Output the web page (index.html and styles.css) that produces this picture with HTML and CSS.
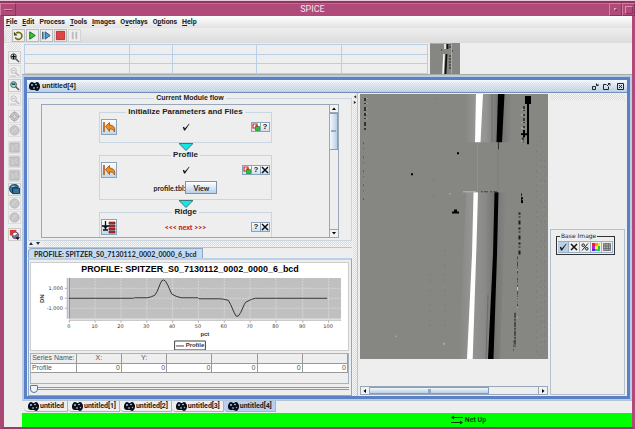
FILE: index.html
```html
<!DOCTYPE html>
<html lang="en">
<head>
<meta charset="utf-8">
<title>SPICE</title>
<link rel="stylesheet" href="styles.css">
</head>
<body>
<svg class="defs" aria-hidden="true">
  <symbol id="logo" viewBox="0 0 11 9"><rect x="0" y="1" width="11" height="7" rx="3" fill="#0a0f18"/><circle cx="3" cy="2" r="2" fill="#0a0f18"/><circle cx="8" cy="2" r="2" fill="#0a0f18"/><circle cx="8" cy="7" r="2" fill="#0a0f18"/><circle cx="3" cy="3" r="1" fill="#9bc4e6"/><circle cx="7" cy="2.500" r=".8" fill="#d8ecfa"/><circle cx="5" cy="6" r=".8" fill="#d8ecfa"/><circle cx="8.500" cy="5.500" r=".8" fill="#6da8d8"/></symbol>
  <symbol id="check" viewBox="0 0 8 8"><path d="M.8 4.200 2 3.700 2.900 5.500 7 .8 7.500 1 3 7.400H2z" fill="#111"/></symbol>
  <symbol id="cross" viewBox="0 0 8 8"><path d="M1 1 7 7M7 1 1 7" stroke="#111" stroke-width="1.500"/></symbol>
  <symbol id="undo" viewBox="0 0 14 14"><path d="M2 2v10" stroke="#b45a0c" stroke-width="1.600"/><path d="M3.500 6.500 7.500 2.500V5C11 5 13.500 7.500 12.500 12 11.500 9.500 10 9 7.500 9v2.500z" fill="#f58c18" stroke="#7d4512" stroke-width=".7"/></symbol>
  <symbol id="steps" viewBox="0 0 14 14"><path d="M3.500 1v9M0 6h7M1 10h5" stroke="#111" stroke-width="1.300"/><path d="m1 6 2.500 3L6 6z" fill="#111"/><path d="M7 2h6v2H7zM7 5h6v2H7zM7 8h6v2H7zM7 11h6v2H7z" fill="#c83228" stroke="#501010" stroke-width=".6"/></symbol>
  <symbol id="params" viewBox="0 0 8 8"><path d="M1 1h4v4H1z" fill="#fff" stroke="#d02020" stroke-width="1.200"/><path d="M3.500 3.500h4v4h-4z" fill="#21c832" stroke="#168a22" stroke-width=".7"/><path d="M3 3h3" stroke="#d02020"/></symbol>
  <symbol id="tri" viewBox="0 0 14 8"><path d="M0 .5h14L7 7.500z" fill="#18e6e6" stroke="#2b5a5c" stroke-width=".8"/></symbol>
  <symbol id="zoomin" viewBox="0 0 12 12"><path d="m7 7 4 4" stroke="#555" stroke-width="1.600"/><circle cx="5" cy="5" r="3" fill="#bfe6ee" stroke="#333"/><path d="M5 2.500v5M2.500 5h5" stroke="#111" stroke-width="1.300"/></symbol>
  <symbol id="zoomout" viewBox="0 0 12 12"><path d="m7 7 4 4" stroke="#555" stroke-width="1.600"/><circle cx="5" cy="5" r="3.200" fill="#7fe8e4" stroke="#555"/><path d="M3 4.500h4" stroke="#111" stroke-width="1.300"/></symbol>
  <symbol id="zoomoff" viewBox="0 0 12 12"><g stroke="#bbb" fill="none"><path d="m7 7 4 4" stroke-width="1.600"/><circle cx="5" cy="5" r="3"/><path d="M3 5h4M1 11h7"/></g></symbol>
  <symbol id="target" viewBox="0 0 12 12"><circle cx="6" cy="6" r="4.500" fill="#c9c9c9" stroke="#aaa"/><circle cx="6" cy="6" r="2" fill="#ddd" stroke="#aaa"/><path d="M6 0v3M6 9v3M0 6h3M9 6h3" stroke="#aaa"/></symbol>
  <symbol id="disc" viewBox="0 0 12 12"><circle cx="6" cy="6" r="5" fill="#c8c8c8" stroke="#b4b4b4"/><path d="m3 8 5-5" stroke="#ddd"/></symbol>
  <symbol id="grid" viewBox="0 0 12 12"><path d="M1 1h10v10H1z" fill="#c4c4c4" stroke="#b4b4b4"/><path d="m2 4 3 2-2 4M9 2 7 5l3 3" stroke="#d8d8d8" fill="none"/></symbol>
</svg>
<div class="app">
  <header class="titlebar">
    <button class="wm menu-btn" aria-label="Window menu"><i></i></button>
    <h1>SPICE</h1>
    <button class="wm dot" aria-label="Minimize"><i></i></button>
    <button class="wm box" aria-label="Maximize"><i></i></button>
  </header>
  <nav class="menubar">
    <a href="#"><u>F</u>ile</a><a href="#"><u>E</u>dit</a><a href="#">Process</a><a href="#"><u>T</u>ools</a><a href="#"><u>I</u>mages</a><a href="#">O<u>v</u>erlays</a><a href="#">O<u>p</u>tions</a><a href="#"><u>H</u>elp</a>
  </nav>
  <div class="toolbar">
    <span class="grip"></span>
    <button aria-label="Reload"><svg viewBox="0 0 12 12"><path d="M3.500 3.500A3.800 3.800 0 1 1 2.500 8" fill="none" stroke="#6c6a10" stroke-width="1.700"/><path d="M1 2v4h4z" fill="#444410"/></svg></button>
    <button aria-label="Run"><svg viewBox="0 0 12 12"><path d="M3 2v8l6-4z" fill="#2fd22f" stroke="#135c16"/></svg></button>
    <button aria-label="Step"><svg viewBox="0 0 12 12"><path d="M2 2v8" stroke="#234f75" stroke-width="1.500"/><path d="M4.500 2v8L10 6z" fill="#4aa0d8" stroke="#234f75"/></svg></button>
    <button aria-label="Stop"><svg viewBox="0 0 12 12"><path d="M1.500 1.500h9v9h-9z" fill="#e04444" stroke="#a83030"/></svg></button>
    <button class="off" aria-label="Pause"><svg viewBox="0 0 12 12"><path d="M4 2v8M8 2v8" stroke="#bbb" stroke-width="2"/></svg></button>
  </div>
  <div class="main">
    <aside class="side">
      <span class="grip"></span>
      <button aria-label="Zoom in"><svg><use href="#zoomin"/></svg></button>
      <button class="off" aria-label="Zoom in region"><svg><use href="#zoomoff"/></svg></button>
      <button aria-label="Zoom out"><svg><use href="#zoomout"/></svg></button>
      <button class="off gap" aria-label="Zoom to fit"><svg><use href="#zoomoff"/></svg></button>
      <button class="off" aria-label="Center"><svg><use href="#target"/></svg></button>
      <button class="off gap" aria-label="Rotate"><svg><use href="#disc"/></svg></button>
      <button class="off" aria-label="Crop"><svg><use href="#grid"/></svg></button>
      <button class="off" aria-label="Select"><svg><use href="#grid"/></svg></button>
      <button class="off" aria-label="Statistics"><svg><use href="#grid"/></svg></button>
      <button aria-label="Layers"><svg viewBox="0 0 12 12"><path d="M1 3C2 0 8 0 10 2v2H4v6C1 9 0 6 1 3z" fill="#297ba8" stroke="#183c55"/><path d="M4 4.500h7.500v6H4z" fill="#31759b" stroke="#112e42"/><path d="M3 2.500h3" stroke="#aee4f5"/></svg></button>
      <button class="off" aria-label="Clear marks"><svg><use href="#disc"/></svg></button>
      <button class="off gap" aria-label="Marker"><svg><use href="#disc"/></svg></button>
      <button aria-label="Colors"><svg viewBox="0 0 12 12"><path d="M1 1h7v6H1z" fill="#dc3636"/><circle cx="7" cy="7" r="3.500" fill="#4f86b8" stroke="#8a3b48"/><path d="M4 6c1-3 4-2 5-1L6 7z" fill="#fff"/><path d="M7 9h5l-2.500 3z" fill="#111"/></svg></button>
    </aside>
    <div class="work">
      <div class="strip">
        <div class="readout"><i></i><i></i><i></i><i></i><i></i><i></i><i></i><i></i><i></i><i></i><i></i><i></i><i></i><i></i><i></i></div>
        <svg class="thumb" viewBox="0 0 30 31" role="img" aria-label="Image overview"><path d="M0 0h30v31H0z" fill="#868683"/><path d="M15 0v6M14 11 13 31" stroke="#fff" stroke-width="1.500"/><path d="M17.500 0v6M16.500 11 15.500 31" stroke="#111" stroke-width="1.800"/><path d="M20 0v6M20 12v15" stroke="#222" stroke-dasharray="2 1"/><path d="M.5.500h21v30" fill="none" stroke="#d49c98"/><path d="M11 7h1M22 8h1" stroke="#222"/></svg>
      </div>
      <div class="desk">
        <section class="frame">
          <div class="frame-title">
            <svg class="logo"><use href="#logo"/></svg><h2>untitled[4]</h2><span class="hatch"></span>
            <button aria-label="Iconify"><svg viewBox="0 0 9 9"><path d="M1.500 4.500h3v3h-3z" fill="none" stroke="#222"/><path d="M6 3.500 7.500 2M5.500 1.500v2h2" fill="none" stroke="#222"/></svg></button>
            <button aria-label="Restore"><svg viewBox="0 0 9 9"><path d="M4.500 2.500h-3v5h5v-3" fill="none" stroke="#222"/><path d="m5 4 2.500-2.500M6 1.500h2v2" fill="none" stroke="#222"/></svg></button>
            <button class="last" aria-label="Close"><svg viewBox="0 0 9 9"><path d="M1.500 1.500h6v6h-6z" fill="none" stroke="#222"/><path d="m3 3 3 3M6 3 3 6" stroke="#222"/></svg></button>
          </div>
          <div class="body">
            <div class="left">
              <fieldset class="flow">
                <legend>Current Module flow</legend>
                <div class="scroller">
                  <div class="modules">
                    <fieldset class="module">
                      <legend>Initialize Parameters and Files</legend>
                      <div class="row"><button class="big" aria-label="Undo"><svg><use href="#undo"/></svg></button><svg class="tick"><use href="#check"/></svg><span class="acts"><button aria-label="Parameters"><svg><use href="#params"/></svg></button><button>?</button></span></div>
                    </fieldset>
                    <svg class="tri"><use href="#tri"/></svg>
                    <fieldset class="module second">
                      <legend>Profile</legend>
                      <div class="row"><button class="big" aria-label="Undo"><svg><use href="#undo"/></svg></button><svg class="tick"><use href="#check"/></svg><span class="acts"><button aria-label="Parameters"><svg><use href="#params"/></svg></button><button>?</button><button aria-label="Remove"><svg><use href="#cross"/></svg></button></span></div>
                      <div class="file"><label for="view">profile.tbl:</label><button id="view">View</button></div>
                    </fieldset>
                    <svg class="tri"><use href="#tri"/></svg>
                    <fieldset class="module">
                      <legend>Ridge</legend>
                      <div class="row"><button class="big" aria-label="Run step"><svg><use href="#steps"/></svg></button><b class="next">&lt;&lt;&lt; next &gt;&gt;&gt;</b><span class="acts"><button>?</button><button aria-label="Remove"><svg><use href="#cross"/></svg></button></span></div>
                    </fieldset>
                  </div>
                  <div class="vbar">
                    <button aria-label="Scroll up"><svg viewBox="0 0 6 6"><path d="M1 4h4L3 1.500z"/></svg></button>
                    <div class="track"><div class="thumb-v"></div></div>
                    <button aria-label="Scroll down"><svg viewBox="0 0 6 6"><path d="M1 2h4L3 4.500z"/></svg></button>
                  </div>
                </div>
              </fieldset>
              <div class="hsplit"><svg viewBox="0 0 14 5"><path d="M1 4h4L3 1zM8 1h4l-2 3z" fill="#234"/></svg><span></span></div>
              <div class="ptab"><a href="#">PROFILE: SPITZER_S0_7130112_0002_0000_6_bcd</a></div>
              <div class="ppanel">
                <svg class="chart" viewBox="0 0 319 88" role="img" aria-label="Profile chart">
                  <text class="ct" x="160" y="9">PROFILE: SPITZER_S0_7130112_0002_0000_6_bcd</text>
                  <path d="M38 15h274v41H38z" fill="#c0c0c0"/>
                  <path d="M38 25.500h274M38 35.500h274M38 45.500h274M64.500 15v41M90.500 15v41M116.500 15v41M142.500 15v41M168.500 15v41M194.500 15v41M220.500 15v41M246.500 15v41M273.500 15v41M299.500 15v41" stroke="#d6d6d6" stroke-dasharray="2 1" fill="none"/>
                  <path d="M36.500 15v41M34 25.500h2M34 35.500h2M34 45.500h2M38 57.500h274M38.500 58v2M64.500 58v2M90.500 58v2M116.500 58v2M142.500 58v2M168.500 58v2M194.500 58v2M220.500 58v2M246.500 58v2M273.500 58v2M299.500 58v2" stroke="#aaa" fill="none"/>
                  <path d="M38.500 15v41" stroke="#7284b8"/>
                  <path d="M38 35.500H103L104 35H117L121 34 124.500 32.500 127 28.500 130 21 131.500 18 133.500 17 135.500 18.500 138 23 141.500 31 146 33.500 151 35H168L169 36H190L194 36.500 198.500 37.500 201 42 204.500 50 206.500 53.500H208.500L211 50 214.500 42 216 39.500 222 36.500 226 35.500H298" fill="none" stroke="#333"/>
                  <g class="ax end"><text x="32" y="27">1,000</text><text x="32" y="37">0</text><text x="32" y="47">-1,000</text></g>
                  <g class="ax"><text x="38" y="65">0</text><text x="64" y="65">10</text><text x="90" y="65">20</text><text x="116" y="65">30</text><text x="142" y="65">40</text><text x="168" y="65">50</text><text x="194" y="65">60</text><text x="220" y="65">70</text><text x="246" y="65">80</text><text x="273" y="65">90</text><text x="299" y="65">100</text></g>
                  <text class="al" x="175" y="73">pct</text>
                  <text class="al" transform="translate(13 36) rotate(-90)">DN</text>
                  <path d="M144.500 78.500h31v9h-31zM146 83.500h8" fill="none" stroke="#444"/>
                  <text class="al" x="165" y="85">Profile</text>
                </svg>
                <div class="tablebox">
                  <table>
                    <tr><th>Series Name:</th><th>X:</th><th>Y:</th><th></th><th></th><th></th><th></th></tr>
                    <tr><td>Profile</td><td>0</td><td>0</td><td>0</td><td>0</td><td>0</td><td>0</td></tr>
                  </table>
                </div>
                <input type="range" min="0" max="100" value="0" aria-label="Position">
              </div>
            </div>
            <div class="vsplit"><svg viewBox="0 0 5 14"><path d="M4 1v4L1 3zM1 8v4l3-2z" fill="#234"/></svg></div>
            <div class="view">
              <svg class="sky" viewBox="0 0 188 264" preserveAspectRatio="none" role="img" aria-label="Spectrum image">
                <defs>
                  <linearGradient id="glow"><stop offset="0" stop-color="#868683"/><stop offset=".28" stop-color="#999997"/><stop offset=".45" stop-color="#949492"/><stop offset=".72" stop-color="#70706e"/><stop offset=".86" stop-color="#7a7a78"/><stop offset="1" stop-color="#868683"/></linearGradient>
                  <linearGradient id="glow2"><stop offset="0" stop-color="#868683"/><stop offset=".25" stop-color="#949492"/><stop offset=".55" stop-color="#8a8a88"/><stop offset=".75" stop-color="#747472"/><stop offset="1" stop-color="#868683"/></linearGradient>
                  <filter id="soft" x="-50%" width="200%" y="0" height="100%"><feGaussianBlur stdDeviation="0.6 0.1"/></filter>
                </defs>
                <path d="M0 0h188v264H0z" fill="#868683"/>
                <path d="M106 0h46l-2 48h-45z" fill="url(#glow)"/>
                <path d="M106 98h40l-6 166H99z" fill="url(#glow2)"/>
                <g filter="url(#soft)">
                  <path d="M116 0h7L120.500 48H115z" fill="#fff"/>
                  <path d="M138 0h6.500L142 48h-5.500z" fill="#000"/>
                  <path d="M113.500 98h4.500L116.500 150 112.700 264H107L112 160z" fill="#fff"/>
                  <path d="M134.500 98h4L137 160 133.500 264H128L133 160z" fill="#000"/>
                  <path d="M117.500 48v50" stroke="#90908e"/><path d="M138 48v50" stroke="#7e7e7c"/>
                  <path d="M132 0v48M128 200l-2 64" stroke="#666" stroke-width=".8"/>
                  <path d="M138.500 48v7" stroke="#333"/>
                </g>
                <path d="M103 97.500h13" stroke="#bbb"/><path d="M121 97.500h17" stroke="#444" stroke-dasharray="2 1 4 2"/>
                <path d="M165 2h6v8h-6zM167 10h2v40h-2zM161 39h7v2h-7zM163 36h2v7h-2zM97 58h2v2h-2zM51 79h2v2h-2zM92 117h7v2h-7zM94 115h3v2h-3z" fill="#000"/>
                <path d="M164 12v24M163 43v6" stroke="#222" stroke-width="1.500" stroke-dasharray="3 1 1 3 2 2"/>
                <path d="M162 15v33" stroke="#c0c0be" stroke-dasharray="1 4 2 6"/>
                <path d="M161.500 99v8" stroke="#222" stroke-dasharray="3 2"/>
                <path d="M162 100v15" stroke="#fff" stroke-width="2" stroke-dasharray="0 8 1 3"/>
                <path d="M162 99v15" stroke="#000" stroke-width="2" stroke-dasharray="0 4 2 1 3 2"/>
                <path d="M159.500 118v42" stroke="#1c1c1c" stroke-width="2" stroke-dasharray="2 2 1 3 4 3"/>
                <path d="M157.500 162v50" stroke="#484846" stroke-dasharray="3 2 5 1 1 2"/>
                <path d="M157.500 175v48" stroke="#c4c4c2" stroke-dasharray="1 6 1 9 4 9"/>
                <path d="M155 218v34" stroke="#383836" stroke-width="1.500" stroke-dasharray="5 1 2 1"/><path d="M153.500 246v10" stroke="#555" stroke-dasharray="2 2"/>
                <path d="M5 4v32" stroke="#333" stroke-width="2" stroke-dasharray="3 2 1 3 4 2"/><path d="M7 4v22" stroke="#b4b4b2" stroke-dasharray="1 4"/>
                <path d="M3.500 48v58" stroke="#5c5c5a" stroke-dasharray="2 4 1 7"/><path d="M77 4v20M74 80v30M70 180v60M85 150v90" stroke="#7a7a78" stroke-dasharray="1 4 2 8"/>
                <path d="M177 50v210M181 40v222M184.500 60v200" stroke="#797977" stroke-dasharray="1 5 2 4 1 7"/><path d="M179 55v200M183 80v170" stroke="#959592" stroke-dasharray="1 7 1 4"/>
                <path d="M35 241h2v1h-2zM83 248h2v2h-2zM89 99h2v1h-2z" fill="#aaa"/>
              </svg>
              <div class="hbar">
                <button aria-label="Scroll left"><svg viewBox="0 0 6 6"><path d="M4 1v4L1.500 3z"/></svg></button>
                <div class="track"><div class="thumb-h"></div></div>
                <button aria-label="Scroll right"><svg viewBox="0 0 6 6"><path d="M2 1v4l2.500-2z"/></svg></button>
              </div>
            </div>
            <div class="right">
              <div class="handle"></div>
              <div class="panel">
                <fieldset class="base">
                  <legend>Base Image</legend>
                  <div class="btns">
                    <button class="on" aria-label="Show"><svg><use href="#check"/></svg></button>
                    <button aria-label="Remove"><svg><use href="#cross"/></svg></button>
                    <button aria-label="Stretch"><svg viewBox="0 0 8 8"><path d="M7 .5 1 7.500" stroke="#222"/><circle cx="2.200" cy="2.200" r="1.300" fill="none" stroke="#222"/><circle cx="5.800" cy="5.800" r="1.300" fill="none" stroke="#222"/></svg></button>
                    <button aria-label="Color table"><svg viewBox="0 0 8 8"><path d="M0 0h3v3H0z" fill="#e22"/><path d="M3 0h3v3H3z" fill="#f90"/><path d="M6 0h2v3H6z" fill="#fd2"/><path d="M0 3h3v3H0z" fill="#b2c"/><path d="M3 3h3v3H3z" fill="#fe3"/><path d="M6 3h2v3H6z" fill="#3b3"/><path d="M0 6h3v2H0z" fill="#33d"/><path d="M3 6h3v2H3z" fill="#2bd"/><path d="M6 6h2v2H6z" fill="#2c4"/></svg></button>
                    <button aria-label="Grid"><svg viewBox="0 0 8 8"><path d="M.5.500h7v7h-7zM.5 3h7M.5 5.500h7M3 .5v7M5.500.500v7" fill="#aaa" stroke="#666" stroke-width=".8"/></svg></button>
                  </div>
                </fieldset>
              </div>
            </div>
          </div>
        </section>
      </div>
      <nav class="tabs">
        <a href="#"><svg class="logo"><use href="#logo"/></svg>untitled</a><a href="#"><svg class="logo"><use href="#logo"/></svg>untitled[1]</a><a href="#"><svg class="logo"><use href="#logo"/></svg>untitled[2]</a><a href="#"><svg class="logo"><use href="#logo"/></svg>untitled[3]</a><a href="#" class="sel"><svg class="logo"><use href="#logo"/></svg>untitled[4]</a>
      </nav>
      <footer class="status"><svg viewBox="0 0 12 10"><path d="M2 2.500h10M0 7.500h10" stroke="#063806"/><path d="M0 2.500 3 .5v4zM12 7.500l-3-2v4z" fill="#063806"/></svg>Net Up</footer>
    </div>
  </div>
</div>
</body>
</html>
```
FILE: styles.css
```css
* { box-sizing: border-box; }
html, body { height: 100%; margin: 0; }
body { font: bold 7px/8px "Liberation Sans", Arial, sans-serif; color: #222; background: #eee; overflow: hidden; }
h1, h2 { margin: 0; font: inherit; }
a { color: inherit; text-decoration: none; }
button { margin: 0; padding: 0; border: 0; background: none; font: inherit; color: inherit; display: flex; align-items: center; justify-content: center; }
svg { display: block; flex: none; }
fieldset { margin: 0; padding: 0; border: 1px solid #c9d6e2; min-width: 0; }
legend { margin: 0 auto; padding: 0 2px; }
.defs { position: absolute; width: 0; height: 0; }
.logo { width: 11px; height: 9px; }
.grip { background: repeating-conic-gradient(#ddd 0 25%, #f4f4f4 0 50%) 0 0 / 2px 2px; }

.app { height: 100vh; display: flex; flex-direction: column; border: solid #b04a78; border-width: 0 3px 2px 4px; border-left-color: #a84674; border-bottom-color: #983c68; }
.titlebar { height: 16px; flex: none; margin: 0 -3px 0 -4px; display: flex; align-items: stretch; background: #b04a78; border-top: 1px solid #e9c8d8; box-shadow: inset 0 2px 0 #923560, inset 0 3px 0 #c66a94; }
.titlebar h1 { flex: 1; text-align: center; font: 9px/17px Roboto, sans-serif; color: #f7e2ec; }
.wm { width: 13px; margin-top: 2px; border: 1px solid; border-color: #cf7fa4 #8c335d #8c335d #cf7fa4; }
.menu-btn { width: 16px; }
.menu-btn i { width: 9px; height: 2px; border: 1px solid; border-color: #d891b2 #8c335d #8c335d #d891b2; }
.dot i { width: 3px; height: 3px; border: 1px solid; border-color: #e5a7c3 #8c335d #8c335d #e5a7c3; }
.box i { width: 8px; height: 8px; border: 1px solid; border-color: #d891b2 #8c335d #8c335d #d891b2; }

.menubar { height: 12px; flex: none; display: flex; align-items: center; gap: 5px; padding: 0 2px; background: linear-gradient(#fff, #e2e2e2); font-family: Roboto, sans-serif; }
.toolbar { height: 15px; flex: none; display: flex; align-items: center; gap: 1px; padding: 0 2px; background: linear-gradient(#eee, #dcdcdc); }
.toolbar .grip { width: 5px; height: 12px; }
.toolbar button { width: 13px; height: 13px; border: 1px solid #bbb; background: #eee; }
.toolbar button svg { width: 11px; height: 11px; }
.toolbar .off { border-color: #d4d4d4; }

.main { flex: 1; min-height: 0; display: flex; background: #eee; }
.side { width: 18px; flex: none; display: flex; flex-direction: column; align-items: center; padding: 1px 1px 0 3px; }
.side .grip { width: 14px; height: 6px; margin-bottom: 1px; }
.side button { width: 13px; height: 13px; border: 1px solid #ccc; flex: none; margin-bottom: 1px; }
.side button svg { width: 11px; height: 11px; }
.side .off { border-color: #ddd; }
.side .gap { margin-bottom: 4px; }
.work { flex: 1; min-width: 0; display: flex; flex-direction: column; }
.strip { height: 31px; flex: none; display: flex; gap: 2px; padding-left: 2px; }
.readout { flex: 0 1 404px; display: grid; grid-template-columns: 105fr 43fr 85fr 85fr 86fr; margin-top: 1px; border: solid #b8d0e6; border-width: 1px 0 0 1px; }
.readout i { border: solid #b8d0e6; border-width: 0 1px 1px 0; }
.thumb { width: 30px; height: 31px; }

.desk { flex: 1; min-height: 0; display: flex; padding: 2px 2px 1px; background: #b9cee6; border-top: 1px solid #aaa; }
.frame { flex: 1; min-width: 0; display: flex; flex-direction: column; border: 3px solid #5c80c6; background: #eee; }
.frame-title { height: 13px; flex: none; display: flex; align-items: center; gap: 2px; padding: 0 2px; border-bottom: 1px solid #6f8eb8; background: linear-gradient(#f4f8fc, #b8cfe6); }
.frame-title .hatch { flex: 1; height: 9px; background: repeating-conic-gradient(#a9c3dd55 0 25%, #ffffff55 0 50%) 0 0 / 2px 2px; }
.frame-title button, .frame-title button svg { width: 9px; height: 9px; }
.frame-title .last { margin-left: 3px; }
.body { flex: 1; min-height: 0; display: grid; grid-template-columns: minmax(0, 326fr) 5px minmax(0, 190fr) 79px; }
.left { display: flex; flex-direction: column; min-height: 0; padding: 1px 1px 0; }
.flow { flex: 1; min-height: 0; display: flex; flex-direction: column; padding: 2px 12px; }
.scroller { flex: 1; min-height: 0; height: 100%; display: flex; border: 1px solid #98a8b8; overflow: hidden; }
.modules { flex: 1; min-width: 0; display: flex; flex-direction: column; align-items: center; padding-top: 3px; overflow: hidden; }
.module { width: 173px; height: 35px; flex: none; padding: 3px 1px 0; }
.module.second { height: 49px; }
.module > legend { font-size: 8px; }
.row { display: grid; grid-template-columns: 1fr auto 1fr; align-items: center; height: 16px; }
.big { width: 16px; height: 16px; border: 1px solid #8ba3bb; background: linear-gradient(#fff, #c3d6e8); }
.big svg { width: 14px; height: 14px; }
.tick { width: 8px; height: 8px; }
.acts { display: flex; justify-content: flex-end; }
.acts button { width: 10px; height: 10px; margin-left: -1px; border: 1px solid #8ba3bb; background: linear-gradient(#fff, #cfdeec); font-size: 8px; }
.acts svg { width: 8px; height: 8px; }
.tri { width: 14px; height: 8px; }
.file { display: flex; justify-content: center; align-items: center; margin-top: 3px; font-family: Lato, sans-serif; }
.file button { width: 32px; height: 13px; border: 1px solid #7a94ae; background: linear-gradient(#fff, #b8cfe5); }
.next { color: #c4182c; font-family: Lato, sans-serif; }
.vbar { width: 9px; flex: none; display: flex; flex-direction: column; border-left: 1px solid #98a8b8; }
.vbar button, .hbar button { width: 8px; height: 7px; flex: none; background: #f2f2f2; }
.vbar button svg, .hbar button svg { width: 6px; height: 6px; }
.track { flex: 1; border: 0 solid #98a8b8; }
.vbar .track { border-width: 1px 0; }
.thumb-v { height: 32%; border: 1px solid #7f9fc8; border-left: 0; background: linear-gradient(#8fabc8, #8fabc8) center / 5px 2px no-repeat, linear-gradient(90deg, #f4f8fc, #b8cfe5); }
.hsplit { height: 7px; flex: none; display: flex; align-items: center; gap: 1px; border-bottom: 1px solid #b8c4d0; }
.hsplit svg { width: 14px; height: 5px; }
.hsplit span { flex: 1; height: 5px; }
.hsplit span, .handle { background: repeating-conic-gradient(#d3d9df 0 25%, #f8f8f8 0 50%) 0 0 / 2px 2px; }
.ptab { display: flex; flex: none; }
.ptab a { height: 10px; line-height: 10px; padding: 0 5px; border: 1px solid #8fa8c4; border-bottom: 0; border-radius: 4px 0 0 0; background: #c4dbf2; font-family: Lato, sans-serif; white-space: nowrap; }
.ppanel { flex: none; border: 1px solid #8fa8c4; border-top: 2px solid #b8d0ea; padding: 2px 2px 2px 1px; }
.chart { width: 100%; background: #fff; border: 1px solid #ccc; }
.chart text { text-anchor: middle; fill: #333; }
.chart .ct { font: bold 9px "Liberation Sans", Arial, sans-serif; fill: #000; }
.chart .ax { font: 5px "DejaVu Sans", sans-serif; }
.chart .end text { text-anchor: end; }
.chart .al { font: bold 6px "Liberation Sans", Arial, sans-serif; }
.tablebox { height: 31px; margin-top: 2px; border: 1px solid #a4b4c4; }
table { width: 100%; border-collapse: collapse; table-layout: fixed; font: 7px/8px "Liberation Sans", Arial, sans-serif; color: #555; }
th, td { height: 9px; padding: 0 1px; border-right: 1px solid #999; border-bottom: 1px solid #999; font-weight: normal; white-space: nowrap; }
td { background: #fff; text-align: right; }
td:first-child { text-align: left; }
input[type=range] { appearance: none; display: block; width: 100%; height: 9px; margin: 0; background: linear-gradient(#7f9ab8, #7f9ab8) 0 3px / 100% 1px no-repeat, linear-gradient(#7f9ab8, #7f9ab8) 0 5px / 100% 1px no-repeat; }
input[type=range]::-webkit-slider-thumb { appearance: none; width: 8px; height: 8px; border: 1px solid #56779b; border-radius: 1px 1px 4px 4px; background: #eef4fa; }
.vsplit { padding: 1px 0; border-right: 1px solid #b8c4d0; background: repeating-conic-gradient(#d3d9df 0 25%, #f8f8f8 0 50%) 0 0 / 2px 2px; }
.vsplit svg { width: 4px; height: 12px; background: #eee; }
.view { display: flex; flex-direction: column; justify-content: space-between; padding: 1px 0 1px 2px; min-height: 0; }
.sky { width: 100%; height: 88%; }
.hbar { height: 9px; display: flex; border: 1px solid #98a8b8; }
.hbar .track { border-width: 0 1px; }
.thumb-h { width: 71%; height: 7px; border: 1px solid #7f9fc8; border-left: 0; background: linear-gradient(#8fabc8, #8fabc8) center / 3px 4px no-repeat, linear-gradient(#f4f8fc, #b8cfe5); }
.right { display: flex; flex-direction: column; padding: 1px 2px; min-height: 0; }
.handle { height: 6px; flex: none; }
.panel { margin-top: auto; height: 55%; border: 1px solid #b4c0cc; padding: 2px 5px; }
.base { width: 59px; border: 1px solid #333; padding: 1px; }
.base legend { margin: 0 0 0 2px; padding: 0 1px; font: 6px/8px "DejaVu Sans", sans-serif; }
.btns { display: flex; }
.btns button { flex: 1; height: 12px; border: 1px solid #9ab0c6; border-left-width: 0; }
.btns .on { background: #b8cfe5; }
.btns svg { width: 8px; height: 8px; }

.tabs { height: 13px; flex: none; display: flex; padding: 0 2px; font-family: Roboto, sans-serif; border-top: 1px solid #b4c4d4; }
.tabs a { height: 11px; display: flex; align-items: center; gap: 1px; padding: 0 3px 0 4px; border: solid #a8b4c0; border-width: 0 1px 1px 0; border-radius: 0 0 0 4px; }
.tabs .sel { background: #b8d0ee; }
.status { height: 14px; flex: none; display: flex; align-items: center; justify-content: center; gap: 2px; padding-left: 283px; background: #0f0; color: #0a4a0a; font-family: Roboto, sans-serif; }
.status svg { width: 12px; height: 10px; }
```
